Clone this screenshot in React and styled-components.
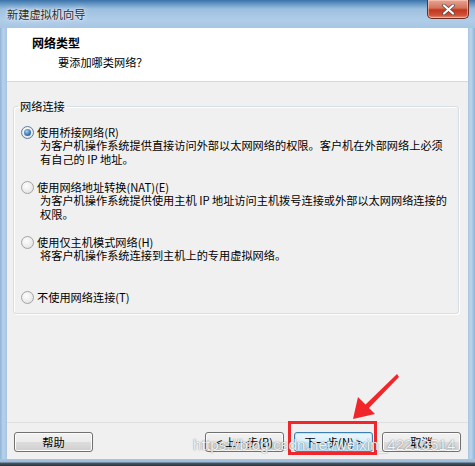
import styled, { createGlobalStyle } from "styled-components";

const GlobalStyle = createGlobalStyle`
  html, body {
    margin: 0;
    padding: 0;
    background: #1f2b38;
  }
  * {
    box-sizing: border-box;
  }
`;

const uiFont = `"Noto Sans CJK SC", "Liberation Sans", sans-serif`;

const Window = styled.div`
  position: relative;
  width: 475px;
  height: 466px;
  display: flex;
  flex-direction: column;
  background: linear-gradient(to right, #8fb3d6 0, #b7d1ea 3px, #a7c5e2 7px, #a7c5e2 468px, #bcd5ec 471px, #8eb2d4 475px);
  font-family: ${uiFont};
  overflow: hidden;
`;

const TitleBar = styled.div`
  height: 28px;
  display: flex;
  justify-content: space-between;
  align-items: flex-start;
  padding: 0 6px 0 7px;
  background: linear-gradient(to bottom, #3a72a8 0, #6697c6 4px, #9dbfdf 9px, #b0cde8 20px, #a7c6e3 28px);
`;

const TitleText = styled.div`
  margin-top: 7px;
  font-size: 11.2px;
  line-height: 14px;
  color: #2a2a2a;
  text-shadow: 0 0 6px rgba(255, 255, 255, 0.9), 0 0 2px rgba(255, 255, 255, 0.9);
`;

const CloseButton = styled.div`
  width: 42px;
  height: 19px;
  display: flex;
  align-items: center;
  justify-content: center;
  border: 1px solid #6b2a22;
  border-top: none;
  border-radius: 0 0 5px 5px;
  background: linear-gradient(to bottom, #e8a593 0, #d3725c 45%, #c2361b 55%, #d0513a 85%, #e49a80 100%);
  box-shadow: inset 0 0 0 1px rgba(255, 220, 200, 0.5);
`;

const Client = styled.div`
  flex: 1;
  margin: 0 7px;
  display: flex;
  flex-direction: column;
  background: #f0f0f0;
`;

const Header = styled.div`
  height: 54px;
  padding: 8px 0 0 25px;
  background: #ffffff;
  border-bottom: 1px solid #d5d9dd;
`;

const HeaderTitle = styled.div`
  font-size: 12px;
  line-height: 14px;
  font-weight: 700;
  color: #000;
`;

const HeaderSub = styled.div`
  margin: 5px 0 0 26px;
  font-size: 11.2px;
  line-height: 14px;
  color: #000;
`;

const Body = styled.div`
  flex: 1;
  padding: 17px 9px 0 6px;
`;

const GroupBox = styled.fieldset`
  margin: 0;
  padding: 12px 0 9px 0;
  min-width: 0;
  border: 1px solid #d5dfe5;
  border-radius: 3px;
  box-shadow: inset 1px 1px 0 #fff, 1px 1px 0 #fff;
`;

const Legend = styled.legend`
  margin-left: 4px;
  padding: 0 2px;
  font-size: 11.2px;
  line-height: 14px;
  color: #000;
`;

const Options = styled.div`
  display: flex;
  flex-direction: column;
`;

const Option = styled.div`
  height: 55px;
  padding-left: 7px;
  &:last-child {
    height: auto;
  }
`;

const OptionLabel = styled.label`
  display: flex;
  align-items: center;
  gap: 3px;
  font-size: 11.2px;
  line-height: 14px;
  color: #000;
`;

const Radio = styled.span`
  width: 13px;
  height: 13px;
  border-radius: 50%;
  border: 1px solid ${(p) => (p.checked ? "#5a7d9e" : "#a3a3a3")};
  background: radial-gradient(circle at 40% 35%, #fdfdfd 0, #ececec 55%, #dadada 100%);
  display: flex;
  align-items: center;
  justify-content: center;
  &::after {
    content: "";
    width: 7px;
    height: 7px;
    border-radius: 50%;
    display: ${(p) => (p.checked ? "block" : "none")};
    background: radial-gradient(circle at 40% 35%, #a6d3f4 0, #3b7ab8 55%, #1d4f86 100%);
  }
`;

const Desc = styled.div`
  padding-left: 19px;
  font-size: 11.2px;
  line-height: 13.5px;
  color: #000;
`;

const Footer = styled.div`
  display: flex;
  align-items: flex-start;
  padding: 9px 7px 7px 7px;
  border-top: 1px solid #dfdfdf;
`;

const Spacer = styled.div`
  flex: 1;
`;

const Button = styled.button`
  width: 79px;
  height: 20px;
  margin-left: ${(p) => p.gap || 0}px;
  padding: 0;
  border: 1px solid ${(p) => (p.primary ? "#3c7fb1" : "#707070")};
  border-radius: 3px;
  background: ${(p) =>
    p.primary
      ? "linear-gradient(to bottom, #eaf6fd 0, #d9f0fc 50%, #bee6fd 51%, #a7d9f5 100%)"
      : "linear-gradient(to bottom, #f2f2f2 0, #ebebeb 50%, #dddddd 51%, #cfcfcf 100%)"};
  box-shadow: inset 0 0 0 1px ${(p) => (p.primary ? "#bfe3f7" : "#fcfcfc")};
  font-family: ${uiFont};
  font-size: 11.2px;
  line-height: 14px;
  color: #000;
`;

const BottomFrame = styled.div`
  height: 7px;
  background: linear-gradient(to bottom, #a7c5e2 0, #9dbcd9 3px, #4a5865 4px, #2a333d 7px);
`;

const Highlight = styled.div`
  position: absolute;
  left: 288px;
  top: 421px;
  width: 89px;
  height: 34px;
  border: 3px solid #f0262a;
`;

const Arrow = styled.svg`
  position: absolute;
  left: 345px;
  top: 368px;
`;

const Watermark = styled.div`
  position: absolute;
  left: 193px;
  top: 436px;
  font-family: "Liberation Sans", Arial, sans-serif;
  font-size: 15px;
  line-height: 18px;
  letter-spacing: 0.2px;
  color: rgba(255, 255, 255, 0.92);
  text-shadow: 0 0 1px rgba(90, 90, 90, 0.75), 0 0 2px rgba(120, 120, 120, 0.4);
  white-space: nowrap;
`;

const options = [
  {
    label: "使用桥接网络(R)",
    checked: true,
    lines: [
      "为客户机操作系统提供直接访问外部以太网网络的权限。客户机在外部网络上必须",
      "有自己的 IP 地址。",
    ],
  },
  {
    label: "使用网络地址转换(NAT)(E)",
    lines: [
      "为客户机操作系统提供使用主机 IP 地址访问主机拨号连接或外部以太网网络连接的",
      "权限。",
    ],
  },
  {
    label: "使用仅主机模式网络(H)",
    lines: ["将客户机操作系统连接到主机上的专用虚拟网络。"],
  },
  { label: "不使用网络连接(T)", lines: [] },
];

const App = () => {
  return (
    <>
      <GlobalStyle />
      <Window>
        <TitleBar>
          <TitleText>新建虚拟机向导</TitleText>
          <CloseButton>
            <svg width="13" height="11" viewBox="0 0 13 11">
              <path
                d="M2 1.5 L11 9.5 M11 1.5 L2 9.5"
                stroke="#4a4a4a"
                strokeWidth="3.6"
                strokeLinecap="round"
              />
              <path
                d="M2 1.5 L11 9.5 M11 1.5 L2 9.5"
                stroke="#ffffff"
                strokeWidth="2.2"
                strokeLinecap="round"
              />
            </svg>
          </CloseButton>
        </TitleBar>
        <Client>
          <Header>
            <HeaderTitle>网络类型</HeaderTitle>
            <HeaderSub>要添加哪类网络？</HeaderSub>
          </Header>
          <Body>
            <GroupBox>
              <Legend>网络连接</Legend>
              <Options>
                {options.map((opt, i) => (
                  <Option key={i}>
                    <OptionLabel>
                      <Radio checked={opt.checked} />
                      {opt.label}
                    </OptionLabel>
                    {opt.lines.map((line, j) => (
                      <Desc key={j}>{line}</Desc>
                    ))}
                  </Option>
                ))}
              </Options>
            </GroupBox>
          </Body>
          <Footer>
            <Button>帮助</Button>
            <Spacer />
            <Button>&lt; 上一步(B)</Button>
            <Button primary gap={10}>
              下一步(N) &gt;
            </Button>
            <Button gap={9}>取消</Button>
          </Footer>
        </Client>
        <BottomFrame />
        <Highlight />
        <Arrow width="60" height="56" viewBox="0 0 60 56">
          <path d="M52 6 L19 38 L22 42 L54 9 Z" fill="#f0262a" />
          <path d="M8 51 L13 29 L30 46 Z" fill="#f0262a" />
        </Arrow>
        <Watermark>https://blog.csdn.net/weixin_42213514</Watermark>
      </Window>
    </>
  );
};

export default App;
